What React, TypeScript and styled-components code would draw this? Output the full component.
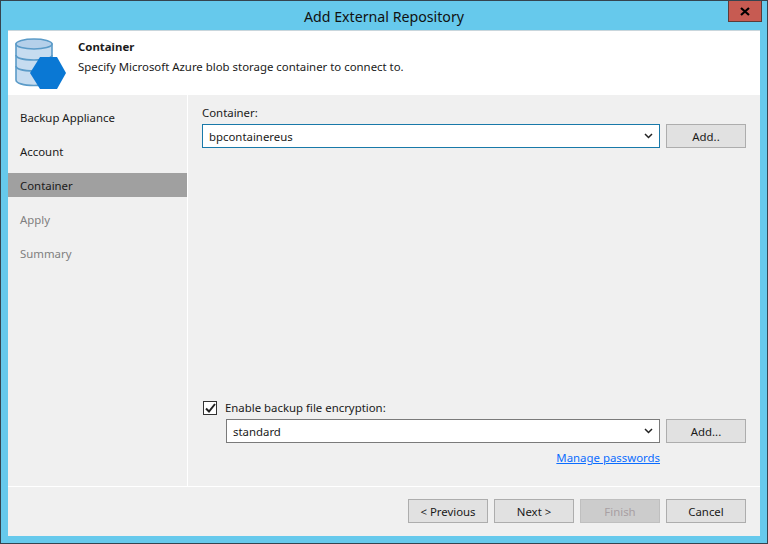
import React from 'react';
import styled, { createGlobalStyle } from 'styled-components';

const GlobalStyle = createGlobalStyle`
  html, body {
    margin: 0;
    padding: 0;
    background: #66c9ec;
  }
  * {
    box-sizing: border-box;
  }
`;

const steps = [
  { label: 'Backup Appliance' },
  { label: 'Account' },
  { label: 'Container', active: true },
  { label: 'Apply', disabled: true },
  { label: 'Summary', disabled: true },
];

function DatabaseIcon() {
  return (
    <svg width="54" height="52" viewBox="0 0 54 52">
      <path d="M1 6v36c0 3 7 5.500 18 5.500s18-2.500 18-5.500V6z" fill="#c6dcf0" stroke="#5b9bc8" strokeWidth="1.600" />
      <ellipse cx="19" cy="6" rx="18" ry="5" fill="#b5d0ea" stroke="#5b9bc8" strokeWidth="1.600" />
      <path d="M1 17c0 3 7 5 18 5s18-2 18-5M1 28c0 3 7 5 18 5s18-2 18-5" fill="none" stroke="#5b9bc8" strokeWidth="1.600" />
      <path d="M15 35 25 19 42 19 51 35 42 51 25 51z" fill="#0a78d4" />
    </svg>
  );
}

function Chevron() {
  return (
    <svg width="9" height="6" viewBox="0 0 9 6">
      <path d="M1 1l3.500 3.500L8 1" fill="none" stroke="#222" strokeWidth="1.500" />
    </svg>
  );
}

function Combo({ value, focused }: { value: string; focused?: boolean }) {
  return (
    <ComboBox $focused={focused}>
      <span>{value}</span>
      <Chevron />
    </ComboBox>
  );
}

export default function App() {
  return (
    <Page>
      <GlobalStyle />
      <TitleBar>
        Add External Repository
        <CloseButton>
          <svg width="10" height="9" viewBox="0 0 10 9">
            <path d="M1 1l8 7M9 1L1 8" stroke="#000" strokeWidth="2.200" />
          </svg>
        </CloseButton>
      </TitleBar>
      <Dialog>
        <Header>
          <DatabaseIcon />
          <HeaderText>
            <HeaderTitle>Container</HeaderTitle>
            <HeaderSub>Specify Microsoft Azure blob storage container to connect to.</HeaderSub>
          </HeaderText>
        </Header>
        <Body>
          <Sidebar>
            {steps.map((s) => (
              <Step key={s.label} $active={s.active} $disabled={s.disabled}>
                {s.label}
              </Step>
            ))}
          </Sidebar>
          <Content>
            <div>
              <FieldLabel>Container:</FieldLabel>
              <Row>
                <Combo value="bpcontainereus" focused />
                <Button>Add..</Button>
              </Row>
            </div>
            <div>
              <CheckRow>
                <CheckBox>
                  <svg width="11" height="10" viewBox="0 0 11 10">
                    <path d="M1 5.500l3 3L10 1" fill="none" stroke="#222" strokeWidth="2" />
                  </svg>
                </CheckBox>
                Enable backup file encryption:
              </CheckRow>
              <IndentedRow>
                <Combo value="standard" />
                <Button>Add...</Button>
              </IndentedRow>
              <LinkRow>
                <PasswordLink href="#">Manage passwords</PasswordLink>
              </LinkRow>
            </div>
          </Content>
        </Body>
        <Footer>
          <Button>&lt; Previous</Button>
          <Button>Next &gt;</Button>
          <Button $disabled>Finish</Button>
          <Button>Cancel</Button>
        </Footer>
      </Dialog>
    </Page>
  );
}

const Page = styled.div`
  width: 768px;
  height: 544px;
  display: flex;
  flex-direction: column;
  padding: 0 7px 7px;
  background: #66c9ec;
  border: 1px solid #35444f;
  font-family: 'Noto Sans', 'Open Sans', sans-serif;
  font-size: 11.4px;
  color: #1a1a1a;
  overflow: hidden;
`;

const TitleBar = styled.div`
  position: relative;
  height: 29px;
  flex: none;
  display: flex;
  align-items: center;
  justify-content: center;
  font-size: 14.2px;
  padding-top: 1px;
  color: #111;
`;

const CloseButton = styled.div`
  position: absolute;
  top: -1px;
  right: -2px;
  width: 34px;
  height: 22px;
  display: flex;
  align-items: center;
  justify-content: center;
  background: #c75b52;
  border: 1px solid #5c3a38;
`;

const Dialog = styled.div`
  flex: 1;
  display: flex;
  flex-direction: column;
  background: #f0f0f0;
  min-height: 0;
`;

const Header = styled.div`
  height: 65px;
  flex: none;
  display: flex;
  align-items: flex-start;
  background: #fff;
  padding: 8px 0 0 7px;
  box-shadow: inset 0 1px 0 #c9d6dc;
`;

const HeaderText = styled.div`
  display: flex;
  flex-direction: column;
  gap: 3px;
  margin-left: 9px;
  padding-top: 1px;
`;

const HeaderTitle = styled.div`
  font-weight: 700;
  line-height: 16px;
`;

const HeaderSub = styled.div`
  line-height: 18px;
`;

const Body = styled.div`
  flex: 1;
  display: flex;
  min-height: 0;
  border-bottom: 1px solid #fff;
`;

const Sidebar = styled.div`
  width: 180px;
  flex: none;
  display: flex;
  flex-direction: column;
  gap: 10px;
  padding-top: 10px;
  border-right: 1px solid #fff;
`;

const Step = styled.div<{ $active?: boolean; $disabled?: boolean }>`
  height: 24px;
  display: flex;
  align-items: center;
  padding-left: 12px;
  background: ${({ $active }) => ($active ? '#a0a0a0' : 'transparent')};
  color: ${({ $disabled }) => ($disabled ? '#7f7f7f' : '#1a1a1a')};
`;

const Content = styled.div`
  flex: 1;
  display: flex;
  flex-direction: column;
  justify-content: space-between;
  padding: 10px 14px 20px 14px;
`;

const FieldLabel = styled.div`
  line-height: 16px;
  margin-bottom: 3px;
`;

const Row = styled.div`
  display: flex;
  gap: 6px;
`;

const IndentedRow = styled(Row)`
  padding-left: 24px;
  margin-top: 3px;
`;

const ComboBox = styled.div<{ $focused?: boolean }>`
  flex: 1;
  height: 24px;
  display: flex;
  align-items: center;
  justify-content: space-between;
  padding: 0 6px;
  background: #fff;
  border: 1px solid ${({ $focused }) => ($focused ? '#1979a9' : '#7a7a7a')};
`;

const Button = styled.div<{ $disabled?: boolean }>`
  width: 80px;
  height: 24px;
  flex: none;
  display: flex;
  align-items: center;
  justify-content: center;
  background: ${({ $disabled }) => ($disabled ? '#cccccc' : '#e1e1e1')};
  border: 1px solid ${({ $disabled }) => ($disabled ? '#bfbfbf' : '#adadad')};
  color: ${({ $disabled }) => ($disabled ? '#a89fa3' : '#1a1a1a')};
`;

const CheckRow = styled.div`
  display: flex;
  align-items: center;
  gap: 8px;
  height: 17px;
  padding-left: 1px;
`;

const CheckBox = styled.div`
  width: 14px;
  height: 14px;
  display: flex;
  align-items: center;
  justify-content: center;
  background: #fff;
  border: 1px solid #333;
`;

const LinkRow = styled.div`
  display: flex;
  justify-content: flex-end;
  padding-right: 86px;
  margin-top: 7px;
  line-height: 16px;
`;

const PasswordLink = styled.a`
  color: #0a6cff;
  text-decoration: underline;
`;

const Footer = styled.div`
  height: 49px;
  flex: none;
  display: flex;
  justify-content: flex-end;
  gap: 6px;
  padding: 12px 14px 0 0;
`;
